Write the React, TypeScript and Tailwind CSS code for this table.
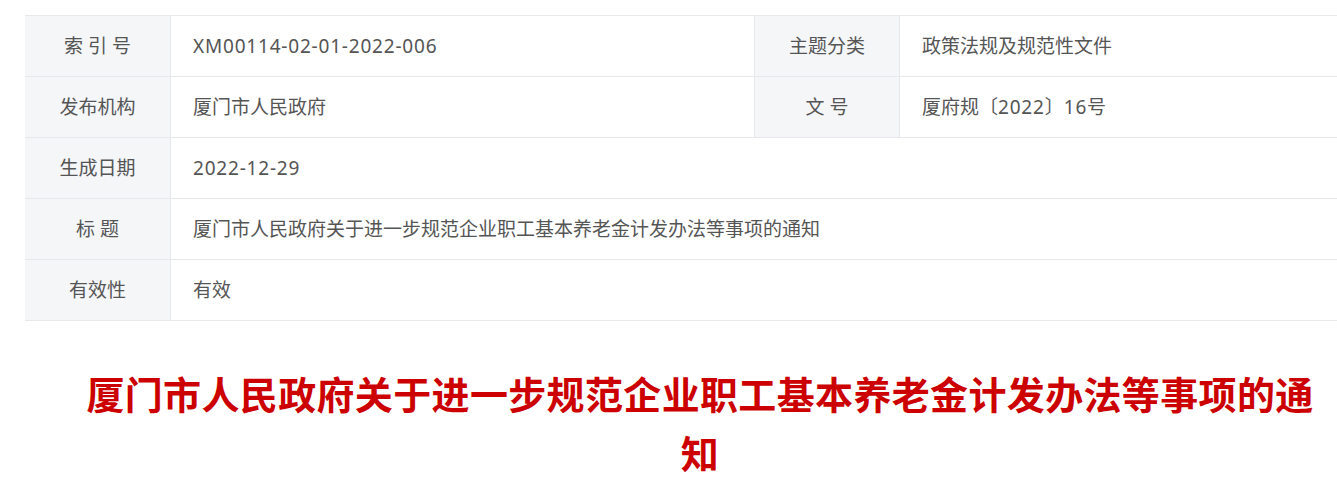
import { ReactNode } from 'react';

const font = { fontFamily: '"Noto Sans", "Noto Sans CJK SC", sans-serif' };

const Label = ({ children }: { children: ReactNode }) => (
  <div className="flex h-[61px] items-center justify-center border-b border-r border-[#e6e8eb] bg-[#f4f6f8] text-[19px] text-[#555]">
    {children}
  </div>
);

const Value = ({ children, span }: { children: ReactNode; span?: boolean }) => (
  <div
    className={
      span
        ? 'col-span-3 flex h-[61px] items-center border-b border-[#e6e8eb] pl-[22px] text-[19px] text-[#555]'
        : 'flex h-[61px] items-center border-b border-r border-[#e6e8eb] pl-[22px] text-[19px] text-[#555]'
    }
  >
    {children}
  </div>
);

// 数字略宽一点
const Num = ({ children }: { children: ReactNode }) => (
  <span className="tracking-[0.8px]">{children}</span>
);

export default function App() {
  return (
    <div className="h-[480px] w-[1337px] overflow-hidden bg-white" style={font}>
      <div className="ml-[25px] w-[1350px] pt-[15px]">
        {/* 信息表 */}
        <div className="grid grid-cols-[146px_584px_145px_1fr] border-t border-[#e6e8eb]">
          <Label>索 引 号</Label>
          <Value>
            <Num>XM00114-02-01-2022-006</Num>
          </Value>
          <Label>主题分类</Label>
          <Value>政策法规及规范性文件</Value>

          <Label>发布机构</Label>
          <Value>厦门市人民政府</Value>
          <Label>文 号</Label>
          <Value>
            厦府规〔<Num>2022</Num>〕<Num>16</Num>号
          </Value>

          <Label>生成日期</Label>
          <Value span>
            <Num>2022-12-29</Num>
          </Value>

          <Label>标 题</Label>
          <Value span>厦门市人民政府关于进一步规范企业职工基本养老金计发办法等事项的通知</Value>

          <Label>有效性</Label>
          <Value span>有效</Value>
        </div>

        {/* 标题 */}
        <h1 className="mt-[44px] px-[56px] text-center text-[38px] font-bold leading-[59px] tracking-[0.35px] text-[#cc0000]">
          厦门市人民政府关于进一步规范企业职工基本养老金计发办法等事项的通知
        </h1>
      </div>
    </div>
  );
}
